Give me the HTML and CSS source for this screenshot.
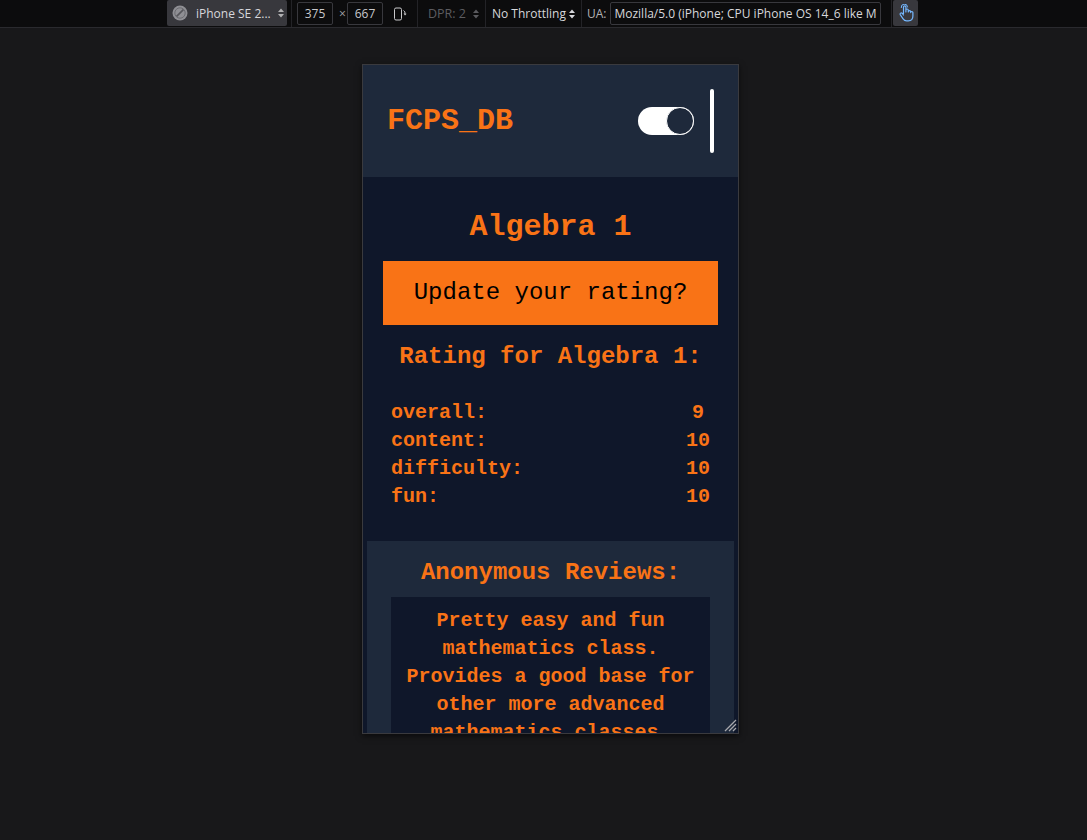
FILE: index.html
```html
<!DOCTYPE html>
<html lang="en">
<head>
<meta charset="utf-8">
<title>FCPS_DB - Algebra 1</title>
<link rel="stylesheet" href="styles.css">
</head>
<body>
<div class="toolbar">
  <div class="device-select">
    <svg class="device-icon" width="16" height="16" viewBox="0 0 16 16"><circle cx="8" cy="8" r="7.5" fill="#8f8f94"/><circle cx="8" cy="8" r="5.2" fill="none" stroke="#6b6b70" stroke-width="1"/><path d="M4.6 11.4 L11.4 4.6" stroke="#55555a" stroke-width="1.6"/></svg>
    <span class="device-name">iPhone SE 2...</span>
    <svg class="updown" width="6" height="10" viewBox="0 0 6 10"><path d="M0 4 L3 0.5 L6 4Z M0 6 L3 9.5 L6 6Z" fill="#b1b1b3"/></svg>
  </div>
  <span class="sep sep-a"></span>
  <span class="size-input w375">375</span>
  <span class="times">×</span>
  <span class="size-input w667">667</span>
  <svg class="rotate" width="14" height="14" viewBox="0 0 14 14"><rect x="1.5" y="1" width="7" height="12" rx="1.5" fill="none" stroke="#c9c9cc" stroke-width="1"/><path d="M10.5 3.5 Q12.5 4.5 12 7" fill="none" stroke="#c9c9cc" stroke-width="1"/><path d="M10.6 6.6 L12 8.6 L13.6 6.8Z" fill="#c9c9cc"/></svg>
  <span class="sep sep-b"></span>
  <span class="dpr">DPR: 2</span>
  <svg class="updown dim" width="6" height="10" viewBox="0 0 6 10"><path d="M0 4 L3 0.5 L6 4Z M0 6 L3 9.5 L6 6Z" fill="#5a5a5e"/></svg>
  <span class="sep sep-c"></span>
  <span class="throttle">No Throttling</span>
  <svg class="updown thr" width="6" height="10" viewBox="0 0 6 10"><path d="M0 4 L3 0.5 L6 4Z M0 6 L3 9.5 L6 6Z" fill="#d7d7db"/></svg>
  <span class="sep sep-d"></span>
  <span class="ua-label">UA:</span>
  <span class="ua-input">Mozilla/5.0 (iPhone; CPU iPhone OS 14_6 like M</span>
  <span class="sep sep-e"></span>
  <div class="touch-btn">
    <svg width="16" height="18" viewBox="0 0 16 18"><path d="M5.5 9.5 V3 a1.2 1.2 0 0 1 2.4 0 V8 M7.9 7.5 V6.2 a1.2 1.2 0 0 1 2.4 0 V8 M10.3 7.8 a1.2 1.2 0 0 1 2.4 0 V8.6 a1.1 1.1 0 0 1 2.2 0 V12 c0 2.8 -1.8 4.8 -4.6 4.8 H8.6 c-1.6 0 -2.6 -0.7 -3.5 -2 L2.2 10.6 a1.2 1.2 0 0 1 1.9 -1.4 L5.5 11" fill="none" stroke="#75b8ff" stroke-width="1.2" stroke-linejoin="round" stroke-linecap="round"/><path d="M3.2 3.6 a3.2 3.2 0 0 1 6.4 -0.6" fill="none" stroke="#75b8ff" stroke-width="1" stroke-linecap="round"/></svg>
  </div>
</div>

<main class="stage">
  <div class="device">
    <div class="viewport">
      <header class="site-header">
        <h1 class="brand">FCPS_DB</h1>
        <div class="header-controls">
          <div class="toggle"><span class="knob"></span></div>
          <span class="menu-bar"></span>
        </div>
      </header>

      <section class="course">
        <h2 class="course-title">Algebra 1</h2>
        <button class="rate-btn" type="button">Update your rating?</button>
        <h3 class="rating-title">Rating for Algebra 1:</h3>
        <div class="ratings">
          <span class="r-label">overall:</span><span class="r-value">9</span>
          <span class="r-label">content:</span><span class="r-value">10</span>
          <span class="r-label">difficulty:</span><span class="r-value">10</span>
          <span class="r-label">fun:</span><span class="r-value">10</span>
        </div>
      </section>

      <section class="reviews">
        <h3 class="reviews-title">Anonymous Reviews:</h3>
        <div class="review-card">
          <p>Pretty easy and fun mathematics class. Provides a good base for other more advanced mathematics classes.</p>
        </div>
      </section>
    </div>
    <svg class="resize" width="14" height="14" viewBox="0 0 14 14"><path d="M13 2 L2 13 M13 6 L6 13 M13 10 L10 13" stroke="#a8a8ac" stroke-width="1.3"/></svg>
  </div>
</main>
</body>
</html>
```

FILE: styles.css
```css
* { box-sizing: border-box; }
html, body { margin: 0; padding: 0; }
body {
  background: #18181a;
  width: 1087px;
  height: 840px;
  overflow: hidden;
  font-family: "Open Sans", "Noto Sans", sans-serif;
}

/* ---------- devtools toolbar ---------- */
.toolbar {
  height: 28px;
  background: #0c0c0d;
  border-bottom: 1px solid #2a2a2e;
  display: flex;
  align-items: center;
  font-size: 12px;
  color: #d7d7db;
  white-space: nowrap;
}
.device-select {
  margin-left: 167px;
  width: 120px;
  height: 26px;
  margin-top: -1px;
  background: #38383d;
  border-radius: 2px;
  display: flex;
  align-items: center;
  padding-left: 5px;
}
.device-icon { flex: none; }
.device-name { margin-left: 8px; color: #d7d7db; }
.updown { flex: none; }
.device-select .updown { margin-left: auto; margin-right: 3px; }
.sep {
  width: 1px;
  height: 27px;
  background: #232327;
  flex: none;
}
.sep-a { margin-left: 4px; }
.size-input {
  height: 23px;
  border: 1px solid #38383d;
  border-radius: 2px;
  display: flex;
  align-items: center;
  justify-content: center;
  width: 36px;
  color: #c8c8cc;
}
.w375 { margin-left: 5px; }
.times { margin-left: 5px; width: 9px; color: #a5a5a9; font-size: 12px; text-align: center; }
.w667 { margin-left: 0px; }
.rotate { margin-left: 10px; flex: none; }
.sep-b { margin-left: 10px; }
.dpr { margin-left: 10px; color: #5c5c60; font-size: 12.5px; }
.updown.dim { margin-left: 7px; }
.sep-c { margin-left: 6px; }
.throttle { margin-left: 6px; color: #d7d7db; }
.updown.thr { margin-left: 3px; }
.sep-d { margin-left: 6px; }
.ua-label { margin-left: 5px; color: #b1b1b3; }
.ua-input {
  margin-left: 4px;
  width: 271px;
  height: 23px;
  border: 1px solid #38383d;
  border-radius: 2px;
  padding-left: 3px;
  display: flex;
  align-items: center;
  overflow: hidden;
  color: #d7d7db;
}
.sep-e { margin-left: 10px; }
.touch-btn {
  margin-left: 1px;
  width: 25px;
  height: 26px;
  margin-top: -1px;
  background: #38383d;
  border-radius: 2px;
  display: flex;
  align-items: center;
  justify-content: center;
}

/* ---------- stage / device frame ---------- */
.stage {
  display: flex;
  justify-content: center;
  padding-top: 36px;
  padding-left: 14px;
}
.device {
  position: relative;
  width: 377px;
  height: 670px;
  border: 1px solid #3a3a3e;
  box-shadow: 0 2px 6px rgba(0, 0, 0, 0.6);
}
.viewport {
  width: 375px;
  height: 668px;
  overflow: hidden;
  background: #0f172a;
  font-family: "Liberation Mono", "Courier New", monospace;
  color: #f97316;
}
.resize {
  position: absolute;
  right: 1px;
  bottom: 1px;
}

/* ---------- site ---------- */
.site-header {
  height: 112px;
  background: #1e293b;
  display: flex;
  align-items: center;
  justify-content: space-between;
  padding: 0 24px;
}
.brand {
  margin: 0;
  font-size: 30px;
  line-height: 36px;
  font-weight: 700;
  color: #f97316;
}
.header-controls {
  display: flex;
  align-items: center;
  gap: 16px;
}
.toggle {
  width: 56px;
  height: 28px;
  border-radius: 14px;
  background: #ffffff;
  display: flex;
  justify-content: flex-end;
}
.knob {
  width: 28px;
  height: 28px;
  border-radius: 50%;
  background: #1e293b;
  border: 1px solid #ffffff;
}
.menu-bar {
  width: 4px;
  height: 64px;
  border-radius: 2px;
  background: #ffffff;
}

.course {
  padding: 32px 20px 0;
  display: flex;
  flex-direction: column;
  align-items: stretch;
}
.course-title {
  margin: 0;
  text-align: center;
  font-size: 30px;
  line-height: 36px;
  font-weight: 700;
}
.rate-btn {
  margin-top: 16px;
  height: 64px;
  border: none;
  background: #f97316;
  color: #000000;
  font-family: "Liberation Mono", "Courier New", monospace;
  font-size: 24px;
  line-height: 32px;
  padding: 0;
  cursor: pointer;
}
.rating-title {
  margin: 16px 0 0;
  text-align: center;
  font-size: 24px;
  line-height: 32px;
  font-weight: 700;
}
.ratings {
  margin-top: 26px;
  padding: 0 8px;
  display: grid;
  grid-template-columns: 1fr auto;
  font-size: 20px;
  line-height: 28px;
  font-weight: 700;
}
.r-value { text-align: center; }

.reviews {
  margin: 30px 4px 0;
  background: #1e293b;
  padding: 16px 24px 24px;
}
.reviews-title {
  margin: 0;
  text-align: center;
  font-size: 24px;
  line-height: 32px;
  font-weight: 700;
}
.review-card {
  margin-top: 8px;
  background: #0f172a;
  padding: 10px 15px 8px;
}
.review-card p {
  margin: 0;
  text-align: center;
  font-size: 20px;
  line-height: 28px;
  font-weight: 700;
}
```
